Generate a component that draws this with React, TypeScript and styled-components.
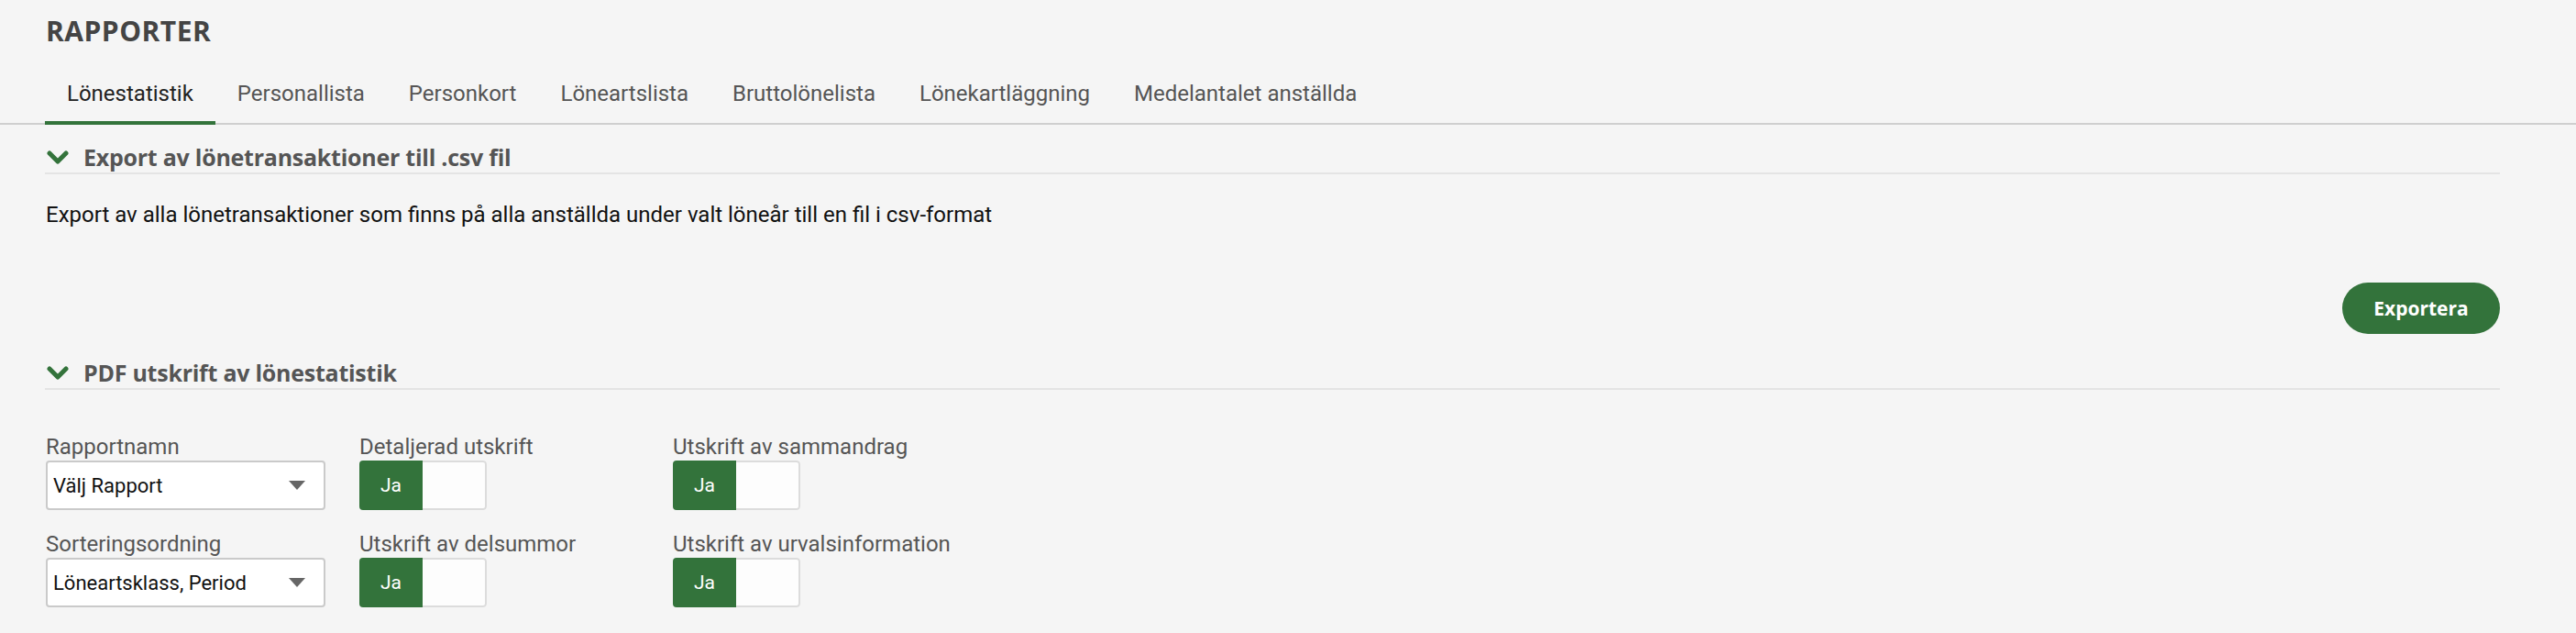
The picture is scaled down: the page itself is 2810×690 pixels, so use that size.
import React from "react";
import styled, { createGlobalStyle } from "styled-components";

const GlobalStyle = createGlobalStyle`
  html, body {
    margin: 0;
    padding: 0;
    background: #f5f5f5;
  }
  body {
    font-family: "Roboto", "Liberation Sans", sans-serif;
  }
`;

const Page = styled.div`
  width: 2810px;
  min-height: 690px;
  background: #f5f5f5;
`;

const TitleBar = styled.div`
  padding: 19px 50px 0;
`;

const Title = styled.h1`
  margin: 0;
  font-family: "Open Sans", sans-serif;
  font-weight: 700;
  font-size: 30px;
  line-height: 30px;
  letter-spacing: 0.5px;
  color: #444;
`;

const TabBar = styled.div`
  display: flex;
  margin-top: 41px;
  padding-left: 49px;
  border-bottom: 2px solid #cfcfcf;
`;

const Tab = styled.div<{ $active?: boolean }>`
  padding: 0 24px 18px;
  margin-bottom: -2px;
  font-size: 24px;
  line-height: 24px;
  color: ${({ $active }) => ($active ? "#222" : "#555")};
  border-bottom: 4px solid ${({ $active }) => ($active ? "#33733b" : "transparent")};
  cursor: pointer;
`;

const Content = styled.div`
  padding: 0 83px 0 49px;
`;

const SectionHeader = styled.div<{ $top: number }>`
  display: flex;
  align-items: center;
  gap: 16px;
  margin-top: ${({ $top }) => $top}px;
  padding: 0 0 4px 2px;
  border-bottom: 2px solid #e4e4e4;
`;

const SectionTitle = styled.h2`
  margin: 0;
  font-family: "Open Sans", sans-serif;
  font-weight: 700;
  font-size: 25px;
  line-height: 25px;
  letter-spacing: -0.25px;
  color: #555;
`;

const Description = styled.p`
  margin: 32px 0 0 1px;
  font-size: 24px;
  line-height: 24px;
  color: #111;
`;

const ButtonRow = styled.div`
  display: flex;
  justify-content: flex-end;
  margin-top: 62px;
`;

const ExportButton = styled.button`
  width: 172px;
  height: 56px;
  border: none;
  border-radius: 28px;
  background: #33733b;
  color: #fff;
  font-family: "Open Sans", sans-serif;
  font-weight: 700;
  font-size: 21px;
  cursor: pointer;
`;

const FormGrid = styled.div`
  display: grid;
  grid-template-columns: 306px 306px 306px;
  column-gap: 36px;
  row-gap: 25px;
  margin-top: 50px;
  padding-left: 1px;
`;

const Field = styled.div`
  display: flex;
  flex-direction: column;
  gap: 3px;
`;

const Label = styled.label`
  font-size: 24px;
  line-height: 24px;
  color: #555;
  white-space: nowrap;
`;

const Select = styled.div`
  box-sizing: border-box;
  display: flex;
  align-items: center;
  justify-content: space-between;
  width: 305px;
  height: 54px;
  padding: 0 20px 0 6px;
  background: #fff;
  border: 2px solid #cacaca;
  border-radius: 4px;
  font-size: 22px;
  color: #111;
`;

const Caret = styled.span`
  width: 0;
  height: 0;
  border-left: 9px solid transparent;
  border-right: 9px solid transparent;
  border-top: 10px solid #666;
`;

const Toggle = styled.div`
  display: flex;
  width: 139px;
  height: 54px;
  border-radius: 4px;
  overflow: hidden;
`;

const ToggleOn = styled.div`
  width: 69px;
  display: flex;
  align-items: center;
  justify-content: center;
  background: #33733b;
  color: #fff;
  font-size: 21px;
`;

const ToggleOff = styled.div`
  flex: 1;
  box-sizing: border-box;
  background: #fdfdfd;
  border: 2px solid #dcdcdc;
  border-left: none;
  border-radius: 0 4px 4px 0;
`;

const Chevron = () => (
  <svg width="24" height="16" viewBox="0 0 24 16">
    <polyline
      points="3,3 12,12 21,3"
      fill="none"
      stroke="#33733b"
      strokeWidth="5"
      strokeLinecap="round"
      strokeLinejoin="round"
    />
  </svg>
);

const tabs = [
  "Lönestatistik",
  "Personallista",
  "Personkort",
  "Löneartslista",
  "Bruttolönelista",
  "Lönekartläggning",
  "Medelantalet anställda",
];

const SelectField = ({ label, value }: { label: string; value: string }) => (
  <Field>
    <Label>{label}</Label>
    <Select>
      <span>{value}</span>
      <Caret />
    </Select>
  </Field>
);

const ToggleField = ({ label }: { label: string }) => (
  <Field>
    <Label>{label}</Label>
    <Toggle>
      <ToggleOn>Ja</ToggleOn>
      <ToggleOff />
    </Toggle>
  </Field>
);

export default function App() {
  return (
    <Page>
      <GlobalStyle />
      <TitleBar>
        <Title>RAPPORTER</Title>
      </TitleBar>
      <TabBar>
        {tabs.map((t, i) => (
          <Tab key={t} $active={i === 0}>
            {t}
          </Tab>
        ))}
      </TabBar>
      <Content>
        <SectionHeader $top={23}>
          <Chevron />
          <SectionTitle>Export av lönetransaktioner till .csv fil</SectionTitle>
        </SectionHeader>
        <Description>
          Export av alla lönetransaktioner som finns på alla anställda under valt löneår till en fil i csv-format
        </Description>
        <ButtonRow>
          <ExportButton>Exportera</ExportButton>
        </ButtonRow>
        <SectionHeader $top={30}>
          <Chevron />
          <SectionTitle>PDF utskrift av lönestatistik</SectionTitle>
        </SectionHeader>
        <FormGrid>
          <SelectField label="Rapportnamn" value="Välj Rapport" />
          <ToggleField label="Detaljerad utskrift" />
          <ToggleField label="Utskrift av sammandrag" />
          <SelectField label="Sorteringsordning" value="Löneartsklass, Period" />
          <ToggleField label="Utskrift av delsummor" />
          <ToggleField label="Utskrift av urvalsinformation" />
        </FormGrid>
      </Content>
    </Page>
  );
}
